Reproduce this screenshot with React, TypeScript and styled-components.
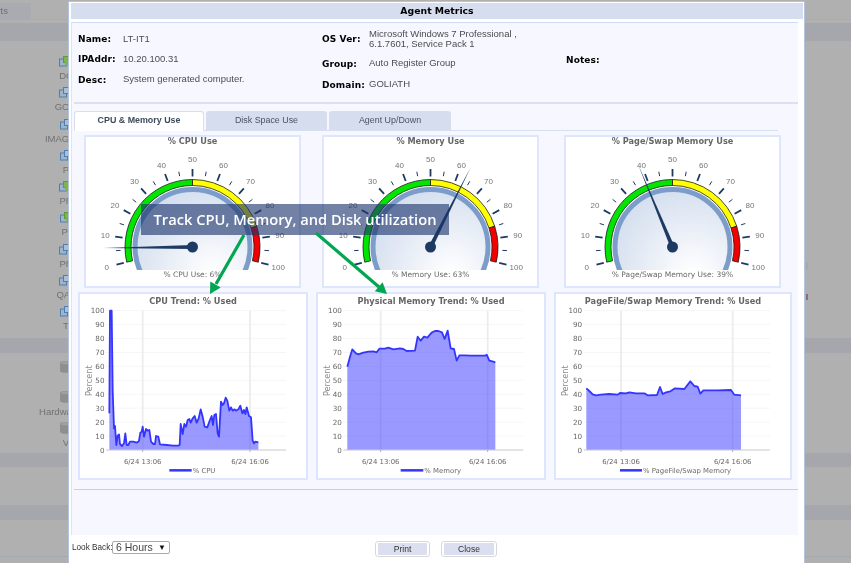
import React from "react";
import styled, { createGlobalStyle } from "styled-components";

const Global = createGlobalStyle`
  html, body { margin: 0; padding: 0; background: #b0b0b0; overflow: hidden; }
  #root { filter: blur(0.4px); }
`;

const sans = `"Liberation Sans", Arial, sans-serif`;
const verdana = `"DejaVu Sans", Verdana, sans-serif`;

const Page = styled.div`
  position: relative; width: 851px; height: 563px; overflow: hidden;
  background: #b0b0b0; font-family: ${sans};
`;
/* page behind the dialog */
const BackTabs = styled.div`
  height: 20px; padding-top: 3px; box-sizing: border-box; display: flex;
  border-bottom: 1px solid #a9adb5; 
`;
const BackTab = styled.div`
  width: 31px; height: 17px; background: #a9abb1; border-radius: 0 3px 0 0; color: #707070;
  font-size: 9.5px; line-height: 15px; display: flex; justify-content: flex-end; padding-right: 23px;
  box-sizing: border-box; overflow: hidden; white-space: nowrap;
`;
const Band = styled.div<{ $h: number; $top?: number }>`
  height: ${(p) => p.$h}px; margin-top: ${(p) => p.$top ?? 0}px; background: #a6a7ad;
`;
const IconColumn = styled.div<{ $pad: number }>`
  width: 132px; padding-top: ${(p) => p.$pad}px; display: flex; flex-direction: column; align-items: center;
`;
const BackItem = styled.div<{ $h: number }>`
  height: ${(p) => p.$h}px; display: flex; flex-direction: column; align-items: center; white-space: nowrap;
  color: #717171; font-size: 9.5px; line-height: 11px;
  svg { margin-bottom: 3px; }
`;
const BackLine = styled.div`height: 1px; margin-top: 36px; background: #a3a7ae;`;
const Grip = styled.div<{ $top: number; $c: string }>`
  position: absolute; left: 806px; top: ${(p) => p.$top}px; width: 2px; height: 6px; background: ${(p) => p.$c};
`;

/* dialog */
const Modal = styled.div`
  position: absolute; left: 68px; top: 1px; width: 737px; height: 570px; box-sizing: border-box;
  background: #fff; border: 1px solid #b4c4de; padding: 1px 1px 0 2px; display: flex; flex-direction: column;
`;
const Header = styled.div`
  height: 16px; background: #d6ddee; text-align: center; font: bold 9.3px/16px ${verdana}; color: #000; flex: none;
`;
const Panel = styled.div`
  margin: 3px 5px 0 0; height: 513px; flex: none; background: #f7f8ff; box-sizing: border-box;
  border-top: 1px solid #cfdcf8; border-left: 1px solid #dbe4fb;
`;
const Info = styled.div`
  height: 79px; display: grid; grid-template-columns: 244px 244px 1fr; padding-left: 6px; box-sizing: border-box;
`;
const InfoCol = styled.div<{ $top: number }>`
  padding-top: ${(p) => p.$top}px; display: flex; flex-direction: column;
`;
const InfoRow = styled.div<{ $h: number; $w: number }>`
  height: ${(p) => p.$h}px; display: grid; grid-template-columns: ${(p) => p.$w}px 1fr; align-items: center;
`;
const InfoLabel = styled.div`font: bold 9px/12px ${verdana}; color: #000; letter-spacing: 0.1px;`;
const InfoValue = styled.div`font: 9.5px/10.5px ${sans}; color: #4c4c50; white-space: pre-line;`;
const Divider = styled.div<{ $top: number; $c: string; $h: number }>`
  height: ${(p) => p.$h}px; margin: ${(p) => p.$top}px 0 0 2px; background: ${(p) => p.$c};
`;
const TabBar = styled.div`
  margin: 7px 20px 0 2px; height: 20px; box-sizing: border-box; display: flex; gap: 2px;
  border-bottom: 1px solid #d5dff0;
`;
const Tab = styled.div<{ $active?: boolean; $w: number }>`
  width: ${(p) => p.$w}px; height: 19px; box-sizing: border-box; border-radius: 3px 3px 0 0; text-align: center;
  font: ${(p) => (p.$active ? "bold" : "normal")} 8.9px/19px ${sans}; color: ${(p) => (p.$active ? "#3d4a5c" : "#4b5260")};
  background: ${(p) => (p.$active ? "#fff" : "#d6ddee")};
  ${(p) => p.$active && "border: 1px solid #d5dff0; border-bottom: 0; line-height: 17px; height: 20px;"}
`;
const GaugeRow = styled.div`
  margin: 4px 0 0 12px; display: grid; grid-template-columns: 238px 242px 217px;
`;
const GaugeCardBox = styled.div`
  width: 217px; height: 153px; box-sizing: border-box; background: #fff; border: 2px solid #dde6fd;
  display: flex; flex-direction: column; overflow: hidden;
`;
const GaugeTitle = styled.div`
  font: bold 8.2px/9px ${verdana}; color: #666; text-align: center; height: 9px; white-space: nowrap;
`;
const GaugeCaption = styled.div`
  font: 7.5px/9px ${verdana}; color: #6a6a6a; text-align: center; height: 9px; margin-top: -4px; white-space: nowrap;
`;
const TrendRow = styled.div`
  margin: 4px 0 0 6px; display: grid; grid-template-columns: 238px 238px 238px;
`;
const TrendBox = styled.div<{ $w: number }>`
  width: ${(p) => p.$w}px; height: 188px; box-sizing: border-box; background: #fff; border: 2px solid #dde6fd;
  display: flex; flex-direction: column; overflow: hidden;
`;
const TrendTitle = styled.div`
  font: bold 8.2px/14px ${verdana}; color: #666; text-align: center; height: 14px; white-space: nowrap;
`;
const Footer = styled.div`
  height: 28px; flex: none; display: flex; position: relative; align-items: flex-start; padding: 6px 0 0 1px; box-sizing: border-box;
`;
const LookBack = styled.div`font: 8.2px/14px ${sans}; color: #333; width: 40px; white-space: nowrap;`;
const Select = styled.div`
  width: 58px; height: 13px; box-sizing: border-box; border: 1px solid #aaa; border-radius: 2px; background: #fff;
  font: 10.5px/11px ${sans}; color: #444; padding-left: 3px; display: flex; justify-content: space-between; padding-right: 3px;
  span:last-child { font-size: 8px; color: #111; }
`;
const Buttons = styled.div`margin-left: 205px; display: flex; gap: 11px;`;
const Button = styled.div<{ $w: number }>`
  width: ${(p) => p.$w}px; height: 16px; box-sizing: border-box; border: 1px solid #d8d8d8; border-radius: 3px; padding: 1px 2px;
  background: #fff; 
  span { display: block; height: 12px; background: #dcdff0; font: 8.6px/12px ${sans}; color: #333; text-align: center; }
`;
/* overlays */
const Callout = styled.div`
  position: absolute; left: 141px; top: 204px; width: 308px; height: 31px; background: rgba(28, 52, 108, 0.62);
  color: #fff; font: 600 14.7px/31px "Open Sans", sans-serif; text-align: center; white-space: nowrap;
`;
const ArrowLayer = styled.svg`
  position: absolute; left: 0; top: 0; width: 851px; height: 563px; pointer-events: none;
`;

/* gauge */
const GCX = 106.5, GCY = 101;
const ang = (v: number) => ((-103 + 2.06 * v) * Math.PI) / 180;
const pol = (r: number, v: number): [number, number] => [GCX + r * Math.sin(ang(v)), GCY - r * Math.cos(ang(v))];
function sector(a: number, b: number, r1: number, r2: number) {
  const [x1, y1] = pol(r2, a), [x2, y2] = pol(r2, b), [x3, y3] = pol(r1, b), [x4, y4] = pol(r1, a);
  return `M${x1} ${y1}A${r2} ${r2} 0 0 1 ${x2} ${y2}L${x3} ${y3}A${r1} ${r1} 0 0 0 ${x4} ${y4}Z`;
}
const GaugeSvg = styled.svg`display: block; flex: none;`;

function Gauge({ id, value }: { id: string; value: number }) {
  const ticks = [];
  for (let v = 0; v <= 100; v += 5) {
    const major = v % 10 === 0;
    const [x1, y1] = pol(major ? 70.5 : 72, v), [x2, y2] = pol(major ? 78 : 76.5, v);
    ticks.push(<line key={v} x1={x1} y1={y1} x2={x2} y2={y2} stroke="#1d3a62" strokeWidth={major ? 1.8 : 1} />);
    if (major) {
      const [lx, ly] = pol(88, v);
      ticks.push(
        <text key={"l" + v} x={lx} y={ly + 3} textAnchor="middle" fontSize="8" fill="#757575" fontFamily="Liberation Sans, Arial, sans-serif">
          {v}
        </text>
      );
    }
  }
  const a = ang(value);
  const tip = pol(89, value);
  const nx = Math.cos(a) * 2.1, ny = Math.sin(a) * 2.1;
  return (
    <GaugeSvg width={213} height={128} viewBox="0 0 213 128">
      <defs>
        <radialGradient id={id} cx="0.68" cy="0.72" r="0.8">
          <stop offset="0" stopColor="#ffffff" />
          <stop offset="1" stopColor="#d2ddee" />
        </radialGradient>
        <clipPath id={id + "c"}>
          <rect x="0" y="0" width="213" height="124" />
        </clipPath>
      </defs>
      {ticks}
      <circle cx={GCX} cy={GCY} r={57.5} fill={`url(#${id})`} stroke="#7c9dc9" strokeWidth={5} clipPath={`url(#${id}c)`} />
      <path d={sector(0, 50, 61.5, 67.5)} fill="#00e600" stroke="#1a1a1a" strokeWidth={0.8} />
      <path d={sector(50, 85, 61.5, 67.5)} fill="#ffff00" stroke="#1a1a1a" strokeWidth={0.8} />
      <path d={sector(85, 100, 61.5, 67.5)} fill="#f00000" stroke="#1a1a1a" strokeWidth={0.8} />
      <polygon points={`${GCX - nx},${GCY - ny} ${tip[0]},${tip[1]} ${GCX + nx},${GCY + ny}`} fill="#1d3a62" />
      <circle cx={GCX} cy={GCY} r={5.5} fill="#1d3a62" />
    </GaugeSvg>
  );
}

function GaugeCard({ id, title, caption, value }: { id: string; title: string; caption: string; value: number }) {
  return (
    <GaugeCardBox>
      <GaugeTitle>{title}</GaugeTitle>
      <Gauge id={id} value={value} />
      <GaugeCaption>{caption}</GaugeCaption>
    </GaugeCardBox>
  );
}

/* trend: points are sampled from the plot as [x, y] on a 3x grid */
type Pt = [number, number];
const cpu: Pt[] = [[118,370],[120,62],[125,62],[128,300],[132,415],[135,408],[139,465],[143,437],[147,433],[150,462],[156,468],[162,460],[166,430],[170,465],[175,465],[180,455],[190,455],[200,458],[207,453],[211,428],[215,425],[218,410],[222,440],[228,417],[233,422],[238,420],[243,455],[250,462],[255,462],[258,438],[265,440],[270,463],[290,465],[310,467],[325,467],[329,465],[332,402],[338,432],[343,402],[348,410],[353,390],[358,387],[362,398],[368,385],[374,378],[380,398],[386,385],[392,358],[398,380],[404,410],[412,412],[418,395],[425,378],[429,405],[433,375],[438,372],[443,430],[447,440],[453,335],[458,345],[462,340],[467,323],[472,332],[478,362],[483,352],[488,362],[494,358],[498,362],[505,358],[511,347],[517,370],[522,360],[526,372],[530,352],[537,378],[543,382],[548,452],[552,460],[556,455],[565,457]];
const mem: Pt[] = [[112,230],[120,200],[127,178],[138,190],[145,193],[160,188],[175,185],[190,184],[200,187],[208,176],[225,176],[235,173],[250,178],[270,175],[280,177],[290,183],[315,182],[323,140],[332,152],[342,140],[352,143],[365,128],[375,123],[385,123],[396,127],[404,147],[413,122],[422,175],[432,177],[440,212],[448,196],[465,196],[480,197],[500,197],[525,197],[530,194],[538,212],[550,215],[556,217]];
const swap: Pt[] = [[106,295],[115,303],[125,313],[135,316],[150,314],[175,312],[200,314],[207,309],[225,310],[235,307],[255,310],[280,310],[290,316],[318,315],[327,291],[335,312],[345,307],[358,304],[372,295],[400,297],[418,274],[430,288],[440,290],[448,311],[457,301],[500,301],[540,300],[550,314],[570,316]];

interface TrendProps {
  w: number; title: string; legend: string; data: Pt[]; ox: number;
  left: number; right: number; v1: number; v2: number; pctX: number; legendFrom: number; legendTo: number;
}
const TrendSvg = styled.svg`display: block; flex: none; overflow: visible;`;

function Trend({ w, title, legend, data, ox, left, right, v1, v2, pctX, legendFrom, legendTo }: TrendProps) {
  const X = (z: number) => z / 3 + ox;
  const Y = (z: number) => z / 3 - 18;
  const font = "DejaVu Sans, Verdana, sans-serif";
  const line = data.map(([x, y]) => `${X(x)},${Y(y)}`).join(" ");
  const area = `${X(data[0][0])},${Y(480)} ${line} ${X(data[data.length - 1][0])},${Y(480)}`;
  const grid = [];
  for (let i = 0; i <= 10; i++) {
    const y = Y(480 - i * 41.8);
    if (i > 0) grid.push(<line key={i} x1={X(left)} x2={X(right)} y1={y} y2={y} stroke="#f6f6f6" />);
    grid.push(
      <text key={"t" + i} x={X(left) - 1.5} y={y + 2.5} textAnchor="end" fontSize="7.2" fill="#666" fontFamily={font}>
        {i * 10}
      </text>
    );
  }
  const h = w - 4;
  return (
    <TrendBox $w={w}>
      <TrendTitle>{title}</TrendTitle>
      <TrendSvg width={h} height={170} viewBox={`0 0 ${h} 170`}>
        {grid}
        {[v1, v2].map((v) => (
          <g key={v}>
            <line x1={X(v)} x2={X(v)} y1={Y(62)} y2={Y(480)} stroke="#ececec" strokeWidth={1.8} />
            <line x1={X(v)} x2={X(v)} y1={Y(480)} y2={Y(486)} stroke="#aaa" />
            <text x={X(v)} y={Y(514) + 2.5} textAnchor="middle" fontSize="6.9" fill="#666" fontFamily={font}>
              6/24 {v === v1 ? "13:06" : "16:06"}
            </text>
          </g>
        ))}
        <polygon points={area} fill="#3333ff" fillOpacity={0.5} />
        <polyline points={line} fill="none" stroke="#3434ff" strokeWidth={1.8} strokeLinejoin="round" />
        <line x1={X(left)} x2={X(right)} y1={Y(480)} y2={Y(480)} stroke="#c8c8c8" />
        <text x={0} y={0} transform={`translate(${X(pctX) + 3},${Y(272)}) rotate(-90)`} textAnchor="middle" fontSize="8.2" fill="#8c8c8c" fontFamily={font}>
          Percent
        </text>
        <line x1={X(legendFrom)} x2={X(legendTo)} y1={Y(541)} y2={Y(541)} stroke="#3434ff" strokeWidth={2.5} />
        <text x={X(legendTo) + 1} y={Y(541) + 2.5} fontSize="6.9" fill="#6a6a6a" fontFamily={font}>
          {legend}
        </text>
      </TrendSvg>
    </TrendBox>
  );
}

const NetIcon = ({ green }: { green?: boolean }) => (
  <svg width="13" height="11" viewBox="0 0 13 11">
    <rect x="0.5" y="3" width="7" height="7" fill="#9db4cc" stroke="#4f7fae" />
    <rect x="4.5" y="0.5" width="7" height="6" fill={green ? "#7fb34f" : "#a9bfd6"} stroke={green ? "#5f9a3a" : "#4f7fae"} />
    {green && <rect x="6" y="3" width="6" height="7" fill="#7fb34f" />}
  </svg>
);
const DbIcon = () => (
  <svg width="16" height="12" viewBox="0 0 16 12">
    <path d="M2 2v8c0 1 2.600 1.800 6 1.800s6-.8 6-1.800V2z" fill="#8f8f8f" />
    <ellipse cx="8" cy="2" rx="6" ry="1.800" fill="#a0a0a0" stroke="#868686" strokeWidth="0.5" />
  </svg>
);

export default function App() {
  return (
    <Page>
      <Global />
      <BackTabs><BackTab>Alerts</BackTab></BackTabs>
      <Band $h={18} $top={3} />
      <IconColumn $pad={15}>
        {["DC", "GOLI", "IMAGES1", "P", "PR", "PI", "PR", "QA1", "T"].map((n, i) => (
          <BackItem key={n + i} $h={31.3}>
            <NetIcon green={i === 0 || i === 4 || i === 5} />
            {n}
          </BackItem>
        ))}
      </IconColumn>
      <Band $h={15} />
      <IconColumn $pad={8}>
        {["", "Hardware IO", "V"].map((n, i) => (
          <BackItem key={i} $h={30.7}>
            <DbIcon />
            {n}
          </BackItem>
        ))}
      </IconColumn>
      <Band $h={14} />
      <Band $h={15} $top={38} />
      <BackLine />
      <Grip $top={263} $c="#a3a7b8" />
      <Grip $top={294} $c="#8d6b8a" />

      <Modal>
        <Header>Agent Metrics</Header>
        <Panel>
          <Info>
            <InfoCol $top={6}>
              <InfoRow $h={20} $w={45}><InfoLabel>Name:</InfoLabel><InfoValue>LT-IT1</InfoValue></InfoRow>
              <InfoRow $h={20} $w={45}><InfoLabel>IPAddr:</InfoLabel><InfoValue>10.20.100.31</InfoValue></InfoRow>
              <InfoRow $h={21} $w={45}><InfoLabel>Desc:</InfoLabel><InfoValue>System generated computer.</InfoValue></InfoRow>
            </InfoCol>
            <InfoCol $top={5}>
              <InfoRow $h={22} $w={47}><InfoLabel>OS Ver:</InfoLabel><InfoValue>{"Microsoft Windows 7 Professional ,\n6.1.7601, Service Pack 1"}</InfoValue></InfoRow>
              <InfoRow $h={27} $w={47}><InfoLabel>Group:</InfoLabel><InfoValue>Auto Register Group</InfoValue></InfoRow>
              <InfoRow $h={15} $w={47}><InfoLabel>Domain:</InfoLabel><InfoValue>GOLIATH</InfoValue></InfoRow>
            </InfoCol>
            <InfoCol $top={31}><InfoLabel>Notes:</InfoLabel></InfoCol>
          </Info>
          <Divider $top={0} $h={2} $c="#dbe1ee" />
          <TabBar>
            <Tab $active $w={130}>CPU &amp; Memory Use</Tab>
            <Tab $w={121}>Disk Space Use</Tab>
            <Tab $w={122}>Agent Up/Down</Tab>
          </TabBar>
          <GaugeRow>
            <GaugeCard id="g1" title="% CPU Use" caption="% CPU Use: 6%" value={6} />
            <GaugeCard id="g2" title="% Memory Use" caption="% Memory Use: 63%" value={63} />
            <GaugeCard id="g3" title="% Page/Swap Memory Use" caption="% Page/Swap Memory Use: 39%" value={39} />
          </GaugeRow>
          <TrendRow>
            <Trend w={230} title="CPU Trend: % Used" legend="% CPU" data={cpu} ox={-10} left={108} right={648} v1={218} v2={540} pctX={57} legendFrom={298} legendTo={365} />
            <Trend w={230} title="Physical Memory Trend: % Used" legend="% Memory" data={mem} ox={-8} left={100} right={640} v1={212} v2={533} pctX={50} legendFrom={272} legendTo={340} />
            <Trend w={238} title="PageFile/Swap Memory Trend: % Used" legend="% PageFile/Swap Memory" data={swap} ox={-5} left={98} right={657} v1={210} v2={545} pctX={42} legendFrom={207} legendTo={273} />
          </TrendRow>
          <Divider $top={9} $h={1} $c="#c5d0e2" />
        </Panel>
        <Footer>
          <LookBack>Look Back:</LookBack>
          <Select><span>6 Hours</span><span>▼</span></Select>
          <Buttons>
            <Button $w={55}><span>Print</span></Button>
            <Button $w={56}><span>Close</span></Button>
          </Buttons>
        </Footer>
      </Modal>

      <Callout>Track CPU, Memory, and Disk utilization</Callout>
      <ArrowLayer viewBox="0 0 851 563">
        <line x1="244" y1="235" x2="216" y2="284" stroke="#00a651" strokeWidth="3.2" />
        <polygon points="210,294 210.300,281.500 220.700,287.500" fill="#00a651" />
        <line x1="316" y1="233" x2="379" y2="287" stroke="#00a651" strokeWidth="3.2" />
        <polygon points="387,294 374.800,291.300 382.600,282.300" fill="#00a651" />
      </ArrowLayer>
    </Page>
  );
}
